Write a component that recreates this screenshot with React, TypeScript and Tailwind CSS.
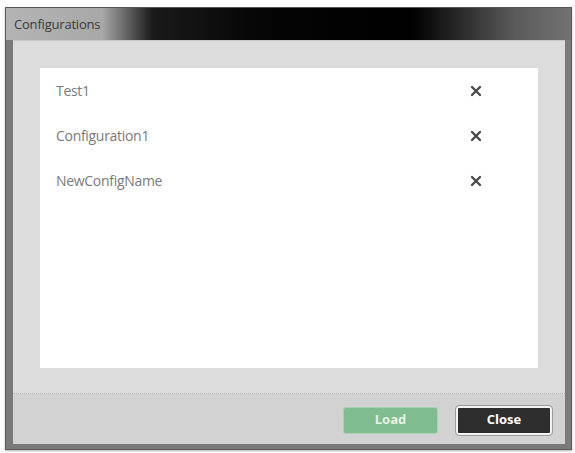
const configs = ['Test1', 'Configuration1', 'NewConfigName'];

const CloseX = () => (
  <svg width="14" height="14" viewBox="0 0 14 14">
    <path d="M3 3 L11 11 M11 3 L3 11" stroke="#4a4a4a" strokeWidth="2.4" strokeLinecap="round" />
  </svg>
);

export default function App() {
  return (
    <div
      className="w-[575px] h-[453px] bg-white pt-[7px] pl-[5px] overflow-hidden"
      style={{ fontFamily: '"Open Sans", "Noto Sans", sans-serif' }}
    >
      <div className="w-[567px] h-[443px] flex flex-col bg-[#7a7a7a] border border-[#5a5a5a] shadow-[0_1px_2px_rgba(0,0,0,0.3)]">
        {/* Title bar */}
        <div className="h-[32px] shrink-0 flex items-center pl-[8px] pt-[2px] bg-[linear-gradient(to_right,#b4b4b4_0%,#a8a8a8_17%,#1a1a1a_26%,#050505_45%,#000_72%,#5a5a5a_90%,#727272_100%)]">
          <span className="text-[13px] text-[#3a3a3a] tracking-[-0.2px]">Configurations</span>
        </div>
        {/* Body */}
        <div className="flex-1 flex flex-col ml-[7px] mr-[6px] mb-[5px] bg-[#dcdcdc] border-t border-[#c8c8c8]">
          <div className="h-[300px] mx-[27px] mt-[27px] bg-white flex flex-col">
            {configs.map((name) => (
              <div key={name} className="h-[45px] flex items-center pl-[16px] pr-[55px]">
                <span className="flex-1 text-[14px] text-[#7a7a7a] tracking-[-0.3px]">{name}</span>
                <CloseX />
              </div>
            ))}
          </div>
          <div className="mt-[25px] border-t border-dotted border-[#b8b8b8]" />
          <div className="flex-1 bg-[#d2d2d2] flex items-center justify-end gap-[18px] pr-[13px] pt-[2px]">
            <button className="w-[95px] h-[27px] rounded-[3px] bg-[#7fbd8e] border border-[#a9d2b2] text-[13px] font-bold text-[#e6f2e8]">
              Load
            </button>
            <button className="w-[96px] h-[29px] rounded-[3px] bg-[#2e2e2e] border-2 border-[#f2f2f2] outline outline-1 outline-[#9a9a9a] text-[13px] font-bold text-white">
              Close
            </button>
          </div>
        </div>
      </div>
    </div>
  );
}
